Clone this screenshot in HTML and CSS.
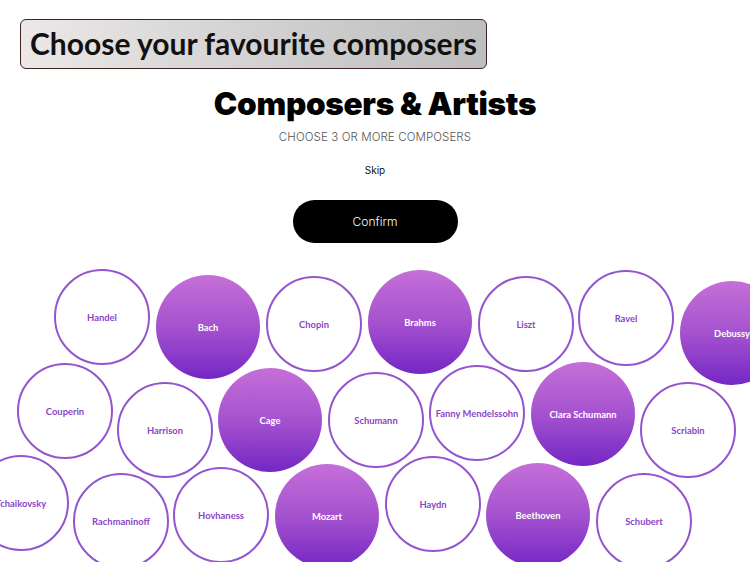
FILE: index.html
```html
<!DOCTYPE html>
<html lang="en">
<head>
<meta charset="utf-8">
<title>Composers &amp; Artists</title>
<link rel="stylesheet" href="styles.css">
</head>
<body>
<div class="page">
  <header class="banner-row">
    <div class="banner">Choose your favourite composers</div>
  </header>
  <main class="intro">
    <h1 class="title">Composers &amp; Artists</h1>
    <p class="subtitle">CHOOSE 3 OR MORE COMPOSERS</p>
    <a class="skip">Skip</a>
    <button class="confirm">Confirm</button>
  </main>
  <section class="canvas">
    <div class="bubble" style="--x:102px;--y:74px"><span>Handel</span></div>
    <div class="bubble on" style="--x:208px;--y:84px"><span>Bach</span></div>
    <div class="bubble" style="--x:314px;--y:81px"><span>Chopin</span></div>
    <div class="bubble on" style="--x:420px;--y:79px"><span>Brahms</span></div>
    <div class="bubble" style="--x:526px;--y:81px"><span>Liszt</span></div>
    <div class="bubble" style="--x:626px;--y:75px"><span>Ravel</span></div>
    <div class="bubble on" style="--x:732px;--y:90px"><span>Debussy</span></div>
    <div class="bubble" style="--x:65px;--y:168px"><span>Couperin</span></div>
    <div class="bubble" style="--x:165px;--y:187px"><span>Harrison</span></div>
    <div class="bubble on" style="--x:270px;--y:177px"><span>Cage</span></div>
    <div class="bubble" style="--x:376px;--y:177px"><span>Schumann</span></div>
    <div class="bubble" style="--x:477px;--y:170px"><span>Fanny Mendelssohn</span></div>
    <div class="bubble on" style="--x:583px;--y:171px"><span>Clara Schumann</span></div>
    <div class="bubble" style="--x:688px;--y:187px"><span>Scriabin</span></div>
    <div class="bubble" style="--x:21px;--y:260px"><span>Tchaikovsky</span></div>
    <div class="bubble" style="--x:121px;--y:278px"><span>Rachmaninoff</span></div>
    <div class="bubble" style="--x:221px;--y:272px"><span>Hovhaness</span></div>
    <div class="bubble on" style="--x:327px;--y:273px"><span>Mozart</span></div>
    <div class="bubble" style="--x:433px;--y:261px"><span>Haydn</span></div>
    <div class="bubble on" style="--x:538px;--y:272px"><span>Beethoven</span></div>
    <div class="bubble" style="--x:644px;--y:278px"><span>Schubert</span></div>
  </section>
</div>
</body>
</html>
```

FILE: styles.css
```css
* { box-sizing: border-box; }
html, body {
  margin: 0;
  padding: 0;
  background: #ffffff;
  overflow: hidden;
}
.page {
  width: 750px;
  height: 562px;
  display: flex;
  flex-direction: column;
  overflow: hidden;
}
.banner-row {
  padding: 19px 0 0 20px;
  display: flex;
}
.banner {
  width: 467px;
  height: 50px;
  border: 1px solid #3e2222;
  border-radius: 6px;
  background: linear-gradient(90deg, #ece8e8 0%, #d3d1d1 50%, #bebebe 100%);
  font-family: "Lato", "Noto Sans", sans-serif;
  font-weight: 700;
  font-size: 30px;
  color: #111;
  display: flex;
  align-items: center;
  justify-content: center;
  line-height: 1;
  padding-bottom: 2px;
}
.intro {
  display: flex;
  flex-direction: column;
  align-items: center;
  font-family: "Inter", "Liberation Sans", sans-serif;
}
.title {
  margin: 15px 0 0;
  height: 40px;
  line-height: 40px;
  font-size: 31.5px;
  font-weight: 900;
  color: #000;
  letter-spacing: -0.3px;
}
.subtitle {
  margin: 5px 0 0;
  height: 16px;
  line-height: 16px;
  font-size: 11.5px;
  font-weight: 300;
  color: #555;
  letter-spacing: 0.1px;
}
.skip {
  margin-top: 18px;
  height: 14px;
  line-height: 14px;
  font-size: 10px;
  color: #111;
}
.confirm {
  margin-top: 23px;
  width: 165px;
  height: 43px;
  border: 0;
  border-radius: 22px;
  background: #000;
  color: #fff;
  font-family: "Inter", "Liberation Sans", sans-serif;
  font-size: 12px;
  font-weight: 300;
  padding: 0;
}
.canvas {
  position: relative;
  flex: 1;
  overflow: hidden;
}
.bubble {
  position: absolute;
  left: var(--x);
  top: var(--y);
  width: 96px;
  height: 96px;
  transform: translate(-50%, -50%);
  border: 2px solid #9355cd;
  border-radius: 50%;
  background: #fff;
  display: flex;
  align-items: center;
  justify-content: center;
  font-family: "Lato", "Noto Sans", sans-serif;
  font-weight: 700;
  font-size: 9.4px;
  color: #8a44c9;
  white-space: nowrap;
}
.bubble.on {
  width: 104px;
  height: 104px;
  border: 0;
  background: linear-gradient(180deg, #c56fd8 0%, #a552cf 50%, #7427c4 100%);
  color: #fff;
}
```
